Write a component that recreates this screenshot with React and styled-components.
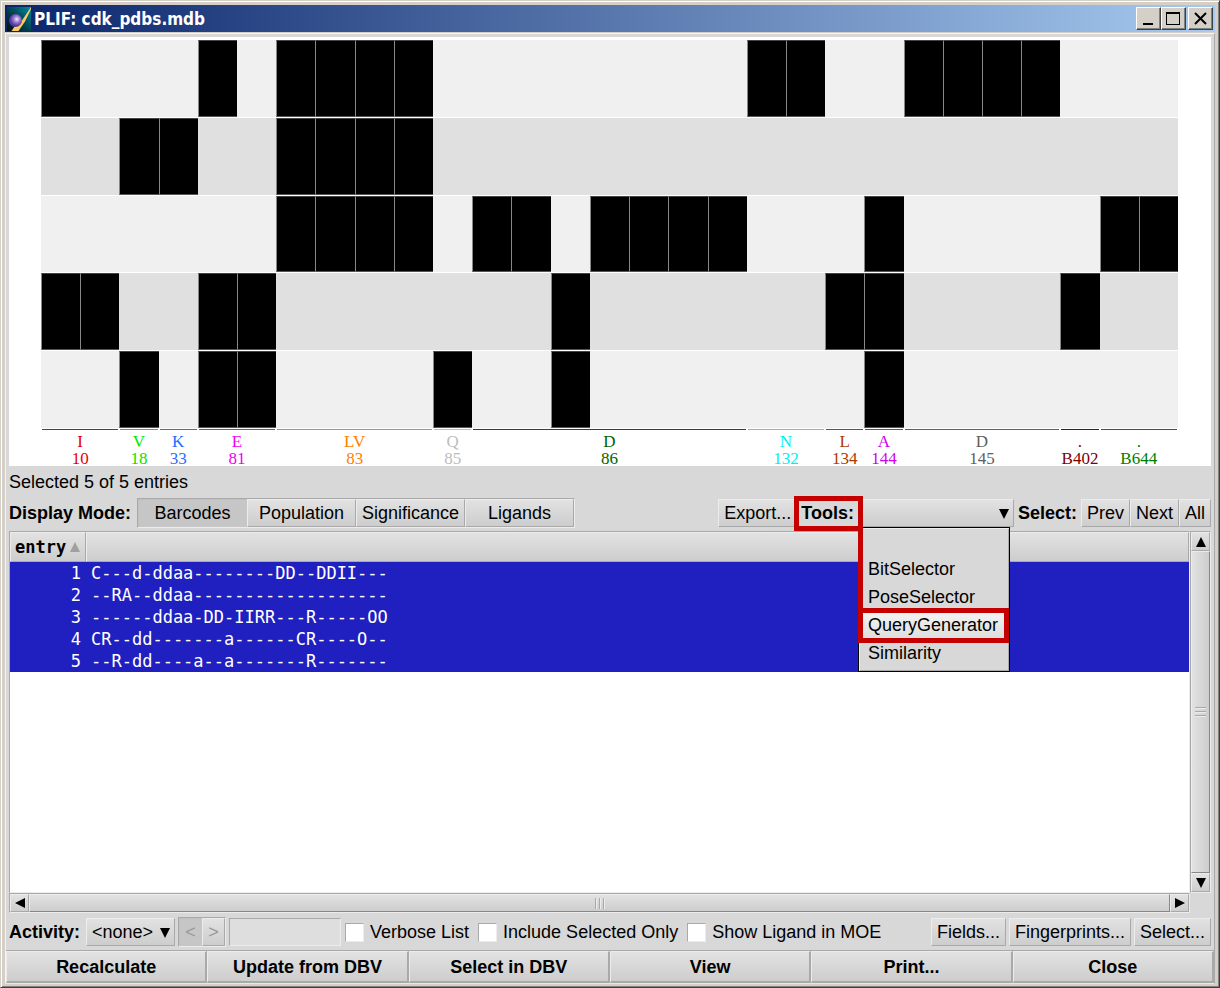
import React from "react";
import styled, { createGlobalStyle, css } from "styled-components";

const GlobalStyle = createGlobalStyle`
  *, *::before, *::after { box-sizing: border-box; }
  html, body { margin: 0; padding: 0; }
  body, button, input, select {
    font-family: "Liberation Sans", Arial, sans-serif;
    font-size: 18px;
    line-height: 20px;
    color: #000;
  }
`;

const LIGHT = "#ececec";
const DARK = "#a9a9a9";
const FACE = "#d8d8d8";
const RED = "#c40000";

const raised = css`
  border: 1px solid;
  border-color: ${LIGHT} ${DARK} ${DARK} ${LIGHT};
  background: linear-gradient(#e2e2e2, #cdcdcd);
`;

const Frame = styled.div`
  min-height: 100vh;
  display: flex;
  flex-direction: column;
  padding: 3px;
  background: #d4d0c8;
  border: 1px solid;
  border-color: #d4d0c8 #404040 #404040 #d4d0c8;
  box-shadow: inset 1px 1px 0 #fff, inset -1px -1px 0 #808080;
`;

const Inner = styled.div`
  flex: 1;
  display: flex;
  flex-direction: column;
  padding: 1px 1px 0 1px;
`;

const TitleBar = styled.header`
  height: 27px;
  display: flex;
  align-items: center;
  padding: 0 2px;
  background: linear-gradient(90deg, #0a246a, #a6caf0);
`;

const Title = styled.h1`
  flex: 1;
  margin: 0 0 0 3px;
  font: bold 17px/20px "DejaVu Sans Condensed", "DejaVu Sans", sans-serif;
  color: #fff;
`;

const WinButton = styled.button`
  width: 25px;
  height: 23px;
  padding: 0;
  margin-left: ${(p) => (p.$apart ? "2px" : "0")};
  display: grid;
  place-items: center;
  background: #d4d0c8;
  border: 1px solid;
  border-color: #fff #404040 #404040 #fff;
  box-shadow: inset -1px -1px 0 #808080;
`;

const Client = styled.main`
  flex: 1;
  display: flex;
  flex-direction: column;
  margin-top: 1px;
  background: ${FACE};
  border: 1px solid;
  border-color: #f4f4f4 ${DARK} #e8e8e8 #f4f4f4;
`;

const Content = styled.div`
  flex: 1;
  display: flex;
  flex-direction: column;
  padding: 3px;
`;

const Chart = styled.section`
  background: #fff;
  padding: 3px 33px 0 32px;
  height: 429px;
`;

const Bars = styled.div`
  display: grid;
  grid-template-rows: repeat(5, 1fr);
  row-gap: 1px;
  height: 388px;
`;

const BarRow = styled.div`
  display: grid;
  grid-template-columns: repeat(29, 1fr);
  background: ${(p) => (p.$odd ? "#e0e0e0" : "#f0f0f0")};
`;

const Bit = styled.span`
  background: ${(p) => (p.$on ? "#000" : "transparent")};
  border: 1px solid;
  border-color: ${(p) => (p.$on ? "#444 transparent #555 #888" : "transparent")};
  border-right: 0;
`;

const Residues = styled.div`
  display: grid;
  grid-template-columns: repeat(29, 1fr);
  margin-top: 1px;
`;

const Residue = styled.div`
  grid-column: span ${(p) => p.$span};
  display: flex;
  flex-direction: column;
  align-items: center;
  color: ${(p) => p.$color};
  font: 17px/17px "Liberation Serif", "Times New Roman", serif;

  &::before {
    content: "";
    align-self: stretch;
    height: 1px;
    margin: 0 1px 3px;
    background: ${(p) => p.$color};
  }
`;

const Cell = styled.span`
  width: 100%;
  display: flex;
  justify-content: center;
  white-space: nowrap;
`;

const Status = styled.p`
  margin: 0;
  line-height: 32px;
`;

const Bar = styled.div`
  display: flex;
  align-items: center;
  height: 30px;
  white-space: nowrap;
`;

const Right = styled.div`
  display: flex;
  align-items: center;
  gap: ${(p) => p.$gap}px;
  margin-left: auto;
`;

const Tight = styled.div`
  display: flex;
`;

const Label = styled.label`
  position: relative;
  font-weight: bold;
  margin-right: ${(p) => (p.$gap ? "6px" : "0")};

  ${(p) =>
    p.$marked &&
    css`
      &::after {
        content: "";
        position: absolute;
        z-index: 3;
        inset: -7px -9px -8px -7px;
        border: 5px solid ${RED};
      }
    `}
`;

const Button = styled.button`
  ${raised}
  height: 28px;
  padding: 0 5px;
`;

const Segments = styled.div`
  display: flex;
  border: 1px solid;
  border-color: ${DARK} ${LIGHT} ${LIGHT} ${DARK};
`;

const Segment = styled.button`
  ${raised}
  width: ${(p) => (p.$small ? "23px" : "109px")};
  height: 28px;
  padding: 0;
  ${(p) => p.$on && "background: #c6c6c6; border-color: #c0c0c0 #c6c6c6 #c6c6c6 #c0c0c0;"}
  &:disabled { color: #999; }
`;

const Picker = styled.div`
  position: relative;
  width: ${(p) => p.$width}px;
  margin-right: ${(p) => (p.$gap ? "3px" : "0")};

  > svg {
    position: absolute;
    right: 5px;
    top: 10px;
    pointer-events: none;
  }
`;

const Select = styled.select`
  ${raised}
  display: block;
  appearance: none;
  width: 100%;
  height: 28px;
  padding: 0 5px;
  border-radius: 0;
`;

const Menu = styled.ul`
  position: absolute;
  z-index: 2;
  top: 28px;
  left: 0;
  width: 152px;
  margin: 0;
  padding: 0 0 3px;
  list-style: none;
  background: ${FACE};
  border: 1px solid #000;
  box-shadow: inset 1px 1px 0 ${LIGHT}, inset -1px -1px 0 ${DARK};

  &::before {
    content: "";
    position: absolute;
    top: 0;
    left: -1px;
    width: 5px;
    height: 84px;
    background: ${RED};
  }
`;

const MenuItem = styled.li`
  position: relative;
  height: 28px;
  padding: 0 9px;
  line-height: 27px;

  ${(p) =>
    p.$marked &&
    css`
      background: linear-gradient(#f4f4f4, #dcdcdc);
      &::after {
        content: "";
        position: absolute;
        inset: -4px 0 -3px -1px;
        border: 5px solid ${RED};
      }
    `}
`;

const ListArea = styled.section`
  flex: 1;
  display: grid;
  grid-template-columns: 1fr 21px;
  grid-template-rows: 1fr 20px;
  margin: 3px 0 4px;
`;

const ListBox = styled.div`
  background: #fff;
  border: 1px solid;
  border-color: ${DARK} ${LIGHT} ${LIGHT} ${DARK};
`;

const Table = styled.table`
  width: 100%;
  border-collapse: separate;
  border-spacing: 0;
  table-layout: fixed;
  font: 17px/22px "DejaVu Sans Mono", monospace;

  col:first-child { width: 76px; }

  th {
    ${raised}
    height: 30px;
    padding: 0 4px;
    text-align: left;
    font-weight: bold;
    white-space: nowrap;
  }
  th svg { margin-left: 4px; vertical-align: 1px; }

  td {
    height: 22px;
    padding: 0 5px;
    background: #2020c0;
    color: #fff;
    white-space: pre;
  }
  td:first-child { text-align: right; }
`;

const Scroll = styled.div`
  display: flex;
  flex-direction: ${(p) => (p.$vertical ? "column" : "row")};
  border: 1px solid;
  border-color: ${DARK} ${LIGHT} ${LIGHT} ${DARK};
`;

const Arrow = styled.button`
  ${raised}
  flex: 0 0 19px;
  min-height: 18px;
  padding: 0;
  display: grid;
  place-items: center;
`;

const Thumb = styled.div`
  ${raised}
  flex: 1;
  display: grid;
  place-items: center;
  ${(p) => p.$vertical && "background: linear-gradient(90deg, #e2e2e2, #cdcdcd);"}
  border-right-color: #888;
  border-bottom-color: #888;
`;

const Grip = styled.i`
  width: ${(p) => (p.$vertical ? "11px" : "10px")};
  height: ${(p) => (p.$vertical ? "10px" : "11px")};
  background: repeating-linear-gradient(
    ${(p) => (p.$vertical ? "180deg" : "90deg")},
    ${DARK} 0 1px, ${LIGHT} 1px 2px, transparent 2px 4px
  );
`;

const TextBox = styled.input`
  width: 112px;
  height: 28px;
  margin: 0 4px 0 3px;
  border: 1px solid;
  border-color: ${DARK} ${LIGHT} ${LIGHT} ${DARK};
  background: #dedede;
`;

const Check = styled.label`
  display: flex;
  align-items: center;
  gap: 6px;
  margin-right: 9px;

  input {
    appearance: none;
    width: 19px;
    height: 19px;
    margin: 0;
    background: #fff;
    border: 1px solid;
    border-color: ${DARK} ${LIGHT} ${LIGHT} ${DARK};
  }
`;

const Actions = styled.footer`
  display: grid;
  grid-template-columns: repeat(6, 1fr);
  border-top: 1px solid ${DARK};
`;

const Action = styled.button`
  ${raised}
  height: 32px;
  padding: 0;
  font-weight: bold;
  border-right-width: 2px;
  border-bottom-width: 2px;
`;

const RESIDUES = [
  ["I", "10", 2, "#e60000"],
  ["V", "18", 1, "#00e600"],
  ["K", "33", 1, "#2a6cff"],
  ["E", "81", 2, "#f000f0"],
  ["LV", "83", 4, "#ff8000"],
  ["Q", "85", 1, "#bdbdbd"],
  ["D", "86", 7, "#006400"],
  ["N", "132", 2, "#00f0f0"],
  ["L", "134", 1, "#b03a00"],
  ["A", "144", 1, "#d000f0"],
  ["D", "145", 4, "#606060"],
  [".", "B402", 1, "#800000"],
  [".", "B644", 2, "#008000"],
];

const ENTRIES = [
  "C---d-ddaa--------DD--DDII---",
  "--RA--ddaa-------------------",
  "------ddaa-DD-IIRR---R-----OO",
  "CR--dd-------a------CR----O--",
  "--R-dd----a--a-------R-------",
];

const ARROWS = {
  up: "M5 0 10 10H0Z",
  down: "M0 0H10L5 10Z",
  left: "M10 0V10L0 5Z",
  right: "M0 0 10 5 0 10Z",
};

function Triangle({ dir, fill = "#000" }) {
  return (
    <svg width="10" height="10" viewBox="0 0 10 10" aria-hidden="true">
      <path d={ARROWS[dir]} fill={fill} />
    </svg>
  );
}

function AppIcon() {
  return (
    <svg width="24" height="24" viewBox="0 0 24 24" aria-hidden="true">
      <defs>
        <linearGradient id="sky" x1="0" y1="1" x2="1" y2="0">
          <stop offset="0" stopColor="#000c14" />
          <stop offset="0.5" stopColor="#004454" />
          <stop offset="1" stopColor="#008ca0" />
        </linearGradient>
        <radialGradient id="ball" cx="0.6" cy="0.4">
          <stop offset="0" stopColor="#f0e8ff" />
          <stop offset="0.5" stopColor="#9878d0" />
          <stop offset="1" stopColor="#5038a0" />
        </radialGradient>
      </defs>
      <rect width="24" height="24" fill="url(#sky)" />
      <path d="M24 0V2L18 14.500 11.500 24H4.500L8 19 13 16.500Z" fill="#ffc860" />
      <circle cx="8.500" cy="13.500" r="6.500" fill="url(#ball)" />
    </svg>
  );
}

function ScrollBar({ vertical }) {
  return (
    <Scroll $vertical={vertical}>
      <Arrow aria-label={vertical ? "Scroll up" : "Scroll left"}>
        <Triangle dir={vertical ? "up" : "left"} />
      </Arrow>
      <Thumb $vertical={vertical}>
        <Grip $vertical={vertical} />
      </Thumb>
      <Arrow aria-label={vertical ? "Scroll down" : "Scroll right"}>
        <Triangle dir={vertical ? "down" : "right"} />
      </Arrow>
    </Scroll>
  );
}

export default function App() {
  return (
    <>
      <GlobalStyle />
      <Frame>
        <Inner>
          <TitleBar>
            <AppIcon />
            <Title>PLIF: cdk_pdbs.mdb</Title>
            <WinButton aria-label="Minimize">
              <svg width="17" height="15"><path d="M3 12H13V14H3Z" /></svg>
            </WinButton>
            <WinButton aria-label="Maximize">
              <svg width="17" height="15">
                <path d="M1 1H15V14H1ZM2 3V13H14V3Z" fillRule="evenodd" />
              </svg>
            </WinButton>
            <WinButton aria-label="Close" $apart>
              <svg width="17" height="15">
                <path d="M3 2 14 13M14 2 3 13" stroke="#000" strokeWidth="2" />
              </svg>
            </WinButton>
          </TitleBar>

          <Client>
            <Content>
              <Chart>
                <Bars>
                  {ENTRIES.map((bits, i) => (
                    <BarRow key={i} $odd={i % 2 === 1}>
                      {[...bits].map((b, j) => (
                        <Bit key={j} $on={b !== "-"} />
                      ))}
                    </BarRow>
                  ))}
                </Bars>
                <Residues>
                  {RESIDUES.map(([name, num, span, color]) => (
                    <Residue key={num} $span={span} $color={color}>
                      <Cell>{name}</Cell>
                      <Cell>{num}</Cell>
                    </Residue>
                  ))}
                </Residues>
              </Chart>

              <Status>Selected 5 of 5 entries</Status>

              <Bar>
                <Label as="span" $gap>Display Mode:</Label>
                <Segments>
                  <Segment $on>Barcodes</Segment>
                  <Segment>Population</Segment>
                  <Segment>Significance</Segment>
                  <Segment>Ligands</Segment>
                </Segments>
                <Right $gap={4}>
                  <Button>Export...</Button>
                  <Label htmlFor="tools" $marked>Tools:</Label>
                  <Picker $width={156}>
                    <Select id="tools" defaultValue="">
                      <option value=""></option>
                    </Select>
                    <Triangle dir="down" />
                    <Menu>
                      <MenuItem />
                      <MenuItem>BitSelector</MenuItem>
                      <MenuItem>PoseSelector</MenuItem>
                      <MenuItem $marked>QueryGenerator</MenuItem>
                      <MenuItem>Similarity</MenuItem>
                    </Menu>
                  </Picker>
                  <Label as="span">Select:</Label>
                  <Tight>
                    <Button>Prev</Button>
                    <Button>Next</Button>
                    <Button>All</Button>
                  </Tight>
                </Right>
              </Bar>

              <ListArea>
                <ListBox>
                  <Table>
                    <colgroup>
                      <col />
                      <col />
                    </colgroup>
                    <thead>
                      <tr>
                        <th>entry<Triangle dir="up" fill="#a0a0a0" /></th>
                        <th aria-label="fingerprint" />
                      </tr>
                    </thead>
                    <tbody>
                      {ENTRIES.map((bits, i) => (
                        <tr key={i}>
                          <td>{i + 1}</td>
                          <td>{bits}</td>
                        </tr>
                      ))}
                    </tbody>
                  </Table>
                </ListBox>
                <ScrollBar vertical />
                <ScrollBar />
              </ListArea>

              <Bar>
                <Label htmlFor="activity" $gap>Activity:</Label>
                <Picker $width={89} $gap>
                  <Select id="activity">
                    <option>&lt;none&gt;</option>
                  </Select>
                  <Triangle dir="down" />
                </Picker>
                <Segments>
                  <Segment $small $on disabled>&lt;</Segment>
                  <Segment $small disabled>&gt;</Segment>
                </Segments>
                <TextBox aria-label="Activity threshold" disabled />
                <Check><input type="checkbox" />Verbose List</Check>
                <Check><input type="checkbox" />Include Selected Only</Check>
                <Check><input type="checkbox" />Show Ligand in MOE</Check>
                <Right $gap={3}>
                  <Button>Fields...</Button>
                  <Button>Fingerprints...</Button>
                  <Button>Select...</Button>
                </Right>
              </Bar>
            </Content>

            <Actions>
              <Action>Recalculate</Action>
              <Action>Update from DBV</Action>
              <Action>Select in DBV</Action>
              <Action>View</Action>
              <Action>Print...</Action>
              <Action>Close</Action>
            </Actions>
          </Client>
        </Inner>
      </Frame>
    </>
  );
}
